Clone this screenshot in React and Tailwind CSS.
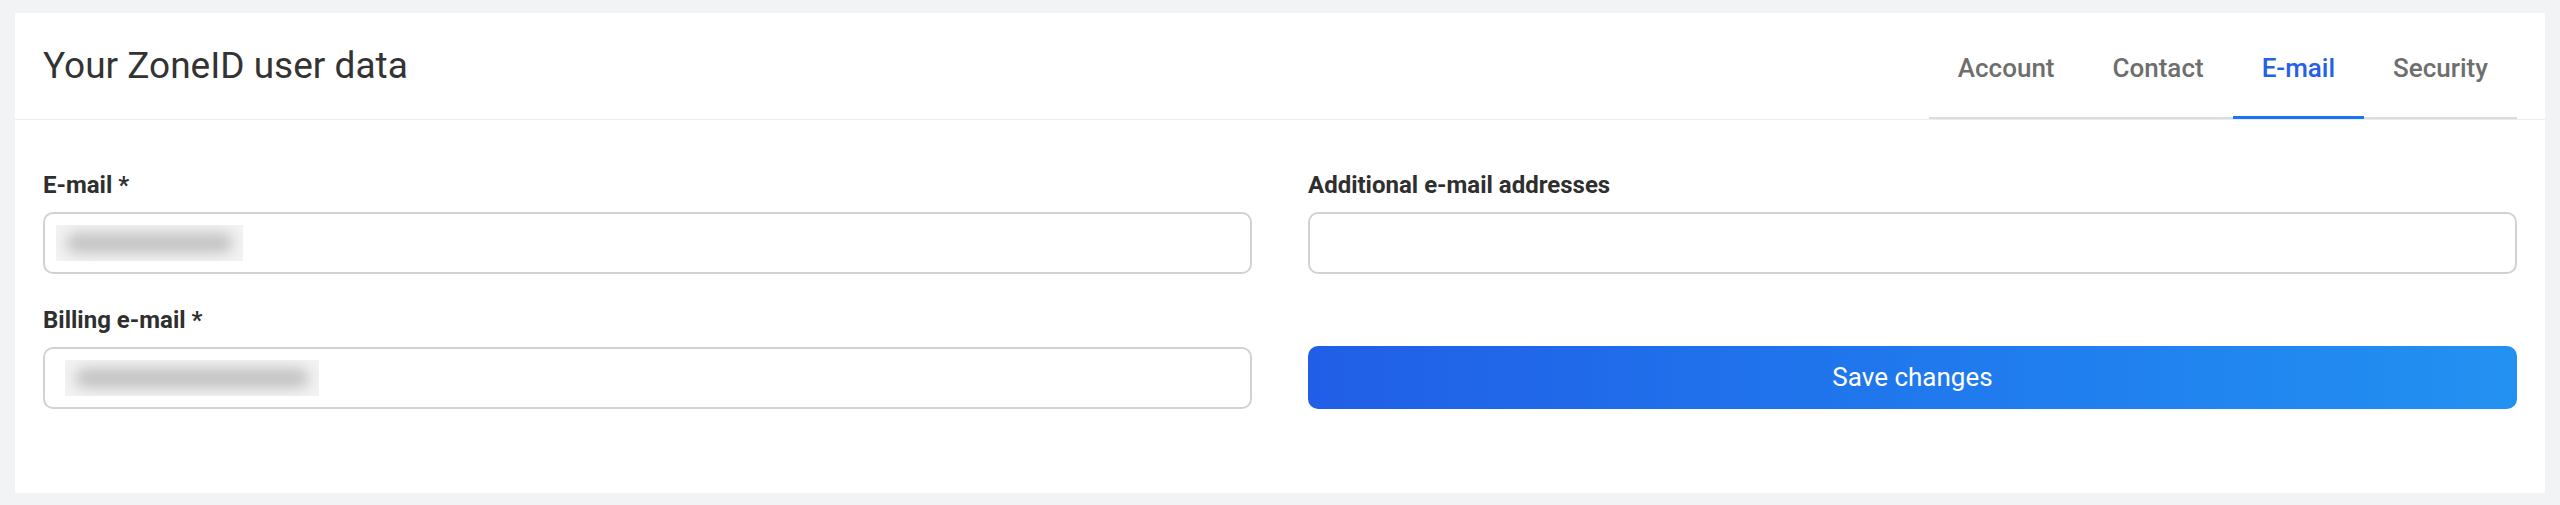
import React from "react";

function Field({ label, children }) {
  return (
    <div className="flex flex-col gap-[13px]">
      <div className="text-[24px] leading-[28px] font-bold text-[#2f2f2f]">{label}</div>
      {children}
    </div>
  );
}

function Redacted({ offset, width }) {
  return (
    <div className="h-[62px] rounded-[10px] border-2 border-[#d2d2d2] bg-white flex items-center">
      <div
        className={`${offset} ${width} h-[36px] bg-[#f3f3f3] flex items-center px-[10px] overflow-hidden`}
      >
        <div className="h-[20px] w-full rounded-full bg-[#c2c2c2] blur-[7px]" />
      </div>
    </div>
  );
}

export default function App() {
  const tabs = ["Account", "Contact", "E-mail", "Security"];
  return (
    <div className="min-h-screen bg-[#f2f3f5] pt-[13px] px-[15px] pb-[12px] font-['Roboto',sans-serif]">
      <div className="bg-white">
        <div className="h-[107px] px-[28px] flex justify-between border-b border-[#ebebf0]">
          <h1 className="self-center text-[37px] leading-[46px] font-normal text-[#333333]">
            Your ZoneID user data
          </h1>
          <div className="self-end flex border-b-2 border-[#dcdcdc]">
            {tabs.map((t) => {
              const active = t === "E-mail";
              return (
                <div
                  key={t}
                  className={`relative px-[29px] pt-[34px] pb-[34px] text-[26px] leading-[30px] font-medium ${
                    active ? "text-[#2461e6]" : "text-[#6e6e6e]"
                  }`}
                >
                  {t}
                  {active && (
                    <span className="absolute left-0 right-0 -bottom-[2px] h-[3px] bg-[#1a75f5]" />
                  )}
                </div>
              );
            })}
          </div>
        </div>
        <div className="px-[28px] pt-[51px] pb-[84px] grid grid-cols-2 gap-x-[56px] gap-y-[32px]">
          <Field label="E-mail *">
            <Redacted offset="ml-[11px]" width="w-[187px]" />
          </Field>
          <Field label="Additional e-mail addresses">
            <div className="h-[62px] rounded-[10px] border-2 border-[#d2d2d2] bg-white" />
          </Field>
          <Field label="Billing e-mail *">
            <Redacted offset="ml-[20px]" width="w-[254px]" />
          </Field>
          <div className="self-end">
            <button className="w-full h-[63px] rounded-[10px] bg-gradient-to-r from-[#215ee7] to-[#2391f2] text-white text-[26px] font-normal">
              Save changes
            </button>
          </div>
        </div>
      </div>
    </div>
  );
}
